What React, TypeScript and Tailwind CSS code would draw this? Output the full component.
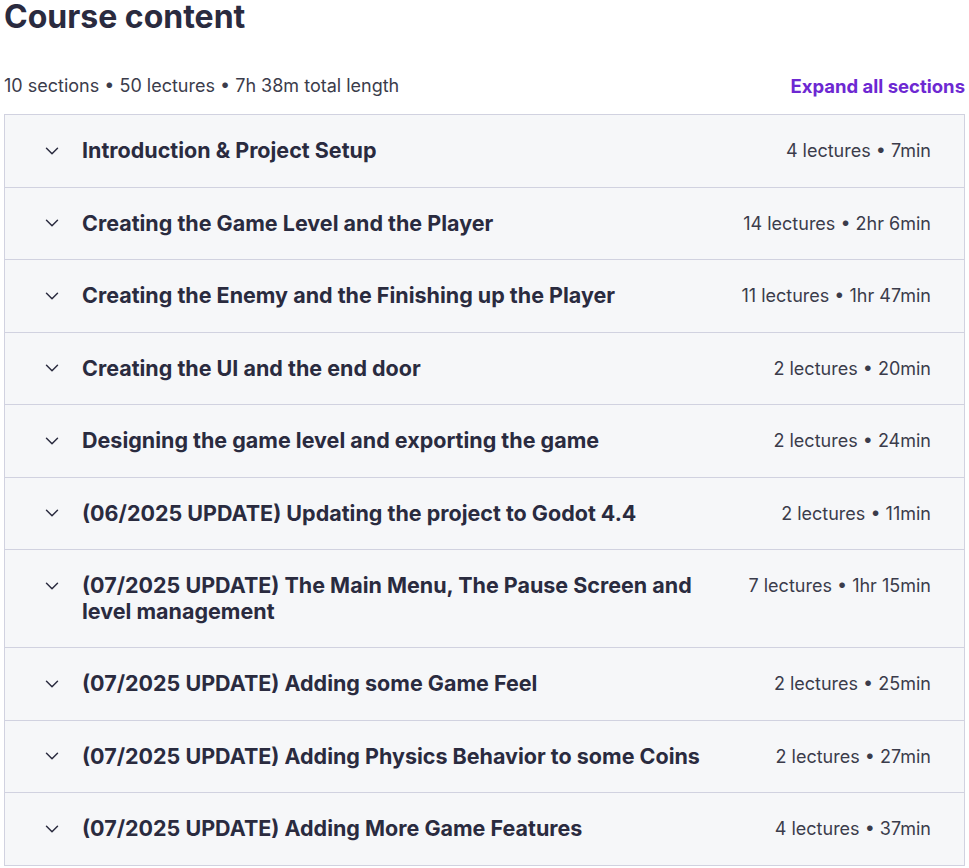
import { ChevronDown } from 'lucide-react';

interface Section {
  title: string;
  meta: string;
}

const sections: Section[] = [
  { title: 'Introduction & Project Setup', meta: '4 lectures • 7min' },
  { title: 'Creating the Game Level and the Player', meta: '14 lectures • 2hr 6min' },
  { title: 'Creating the Enemy and the Finishing up the Player', meta: '11 lectures • 1hr 47min' },
  { title: 'Creating the UI and the end door', meta: '2 lectures • 20min' },
  { title: 'Designing the game level and exporting the game', meta: '2 lectures • 24min' },
  { title: '(06/2025 UPDATE) Updating the project to Godot 4.4', meta: '2 lectures • 11min' },
  {
    title: '(07/2025 UPDATE) The Main Menu, The Pause Screen and level management',
    meta: '7 lectures • 1hr 15min',
  },
  { title: '(07/2025 UPDATE) Adding some Game Feel', meta: '2 lectures • 25min' },
  { title: '(07/2025 UPDATE) Adding Physics Behavior to some Coins', meta: '2 lectures • 27min' },
  { title: '(07/2025 UPDATE) Adding More Game Features', meta: '4 lectures • 37min' },
];

function SectionRow({ section, last }: { section: Section; last: boolean }) {
  return (
    <div
      className={`flex items-start bg-[#f6f7f9] pl-[36px] pr-[33px] py-[23px] ${
        last ? '' : 'border-b border-[#d1d2e0]'
      }`}
    >
      <div className="flex h-[25.5px] w-[22px] shrink-0 items-center justify-center text-[#2a2b3f]">
        <ChevronDown size={22} strokeWidth={1.6} />
      </div>
      <div className="ml-[19px] flex-1 text-[21.5px] font-bold leading-[25.5px] text-[#2a2b3f]">
        {section.title}
      </div>
      <div className="ml-12 shrink-0 text-[18px] leading-[25.5px] text-[#3b3c4b]">{section.meta}</div>
    </div>
  );
}

export default function App() {
  return (
    <div className="min-h-screen bg-white px-1 font-['Inter','Liberation_Sans',sans-serif]">
      <h2 className="pt-px text-[32px] font-bold leading-none text-[#2a2b3f]">Course content</h2>

      <div className="mt-[41px] flex items-center justify-between leading-6">
        <span className="text-[18px] text-[#3b3c4b]">10 sections • 50 lectures • 7h 38m total length</span>
        <button className="text-[18.5px] font-bold text-[#6d28d2]">Expand all sections</button>
      </div>

      <div className="mt-[16px] border border-[#d1d2e0]">
        {sections.map((s, i) => (
          <SectionRow key={s.title} section={s} last={i === sections.length - 1} />
        ))}
      </div>
    </div>
  );
}
